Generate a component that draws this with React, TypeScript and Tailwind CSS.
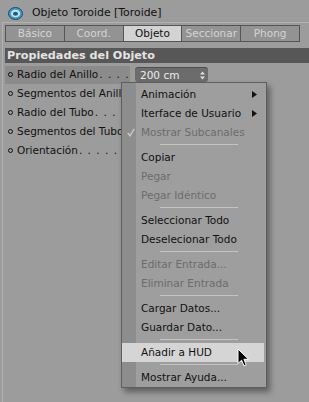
import React from "react";

const TABS = ["Básico", "Coord.", "Objeto", "Seccionar", "Phong"];

const ROWS = [
  { label: "Radio del Anillo", active: true },
  { label: "Segmentos del Anillo" },
  { label: "Radio del Tubo" },
  { label: "Segmentos del Tubo" },
  { label: "Orientación" },
];

type Item =
  | { sep: true }
  | { sep?: false; label: string; disabled?: boolean; sub?: boolean; check?: boolean; hover?: boolean };

const MENU: Item[] = [
  { label: "Animación", sub: true },
  { label: "Iterface de Usuario", sub: true },
  { label: "Mostrar Subcanales", disabled: true, check: true },
  { sep: true },
  { label: "Copiar" },
  { label: "Pegar", disabled: true },
  { label: "Pegar Idéntico", disabled: true },
  { sep: true },
  { label: "Seleccionar Todo" },
  { label: "Deselecionar Todo" },
  { sep: true },
  { label: "Editar Entrada...", disabled: true },
  { label: "Eliminar Entrada", disabled: true },
  { sep: true },
  { label: "Cargar Datos..." },
  { label: "Guardar Dato..." },
  { sep: true },
  { label: "Añadir a HUD", hover: true },
  { sep: true },
  { label: "Mostrar Ayuda..." },
];

function TorusIcon() {
  return (
    <svg width="15" height="13" viewBox="0 0 15 13">
      <ellipse cx="7.5" cy="6.5" rx="7" ry="6" fill="#3d9cc8" stroke="#1d4a66" strokeWidth="1" />
      <ellipse cx="7.5" cy="6.5" rx="4.6" ry="3.8" fill="#bfe6f5" />
      <ellipse cx="7.5" cy="6.8" rx="2.6" ry="2" fill="#2a5a78" />
    </svg>
  );
}

function ContextMenu() {
  return (
    <div className="absolute left-[121px] top-[82px] w-[146px] border border-[#5e5e5e] bg-[#9e9e9e] pt-[1.5px] pb-[0.5px] shadow-[3px_4px_6px_rgba(0,0,0,0.4)]">
      <div className="absolute inset-y-0 left-0 w-[14px] bg-[#8d8d8d]" />
      {MENU.map((item, i) =>
        item.sep ? (
          <div key={i} className="relative flex h-[6px] items-center pl-[38px]">
            <div className="h-px w-[78px] bg-[#c4c4c4]" />
          </div>
        ) : (
          <div
            key={i}
            className={
              "relative flex h-[19px] items-center pl-[19px] " +
              (item.hover ? "mr-[2px] bg-[#d5d5d5] " : "") +
              (item.disabled ? "text-[#6c6c6c]" : "text-[#111]")
            }
          >
            {item.check && (
              <svg className="absolute left-[5px] top-[5px]" width="8" height="9" viewBox="0 0 8 9">
                <path d="M0.8 5 L3 7.8 L7.2 0.8" fill="none" stroke="#c9c9c9" strokeWidth="1.4" />
              </svg>
            )}
            <span>{item.label}</span>
            {item.sub && (
              <svg className="absolute right-[9px] top-[6px]" width="5" height="7" viewBox="0 0 5 7">
                <path d="M0 0 L5 3.5 L0 7 Z" fill="#111" />
              </svg>
            )}
          </div>
        )
      )}
    </div>
  );
}

function Cursor() {
  return (
    <svg className="absolute left-[237px] top-[348px]" width="13" height="20" viewBox="0 0 13 20">
      <path
        d="M1 1 L1 15.5 L4.6 12.2 L7 17.8 L9.2 16.8 L6.9 11.3 L11.5 11.3 Z"
        fill="#000"
        stroke="#fff"
        strokeWidth="1"
        strokeLinejoin="round"
      />
    </svg>
  );
}

export default function App() {
  return (
    <div className="relative h-[402px] w-[309px] overflow-hidden bg-[#9c9c9c] font-['DejaVu_Sans',sans-serif] text-[10.5px] leading-none text-[#111]">
      <div className="flex h-[22px] items-center gap-[9px] pl-[8px] pt-[4px]">
        <TorusIcon />
        <span className="text-[10.9px]">Objeto Toroide [Toroide]</span>
      </div>

      <div className="ml-[2px] h-[380px] border-l border-t border-[#b2b2b2] pl-[2px] pt-[2px]">
        <div className="flex h-[17px] w-[295px] border border-[#555]">
          {TABS.map((t, i) => (
            <div
              key={t}
              className={
                "flex flex-1 items-center justify-center " +
                (i > 0 ? "border-l border-[#555] " : "") +
                (t === "Objeto" ? "bg-[#d3d3d3] text-[#111]" : "bg-[#939393] text-[#d4d4d4]")
              }
            >
              {t}
            </div>
          ))}
        </div>

        <div className="mt-[6px] flex h-[15px] items-center bg-[#575757] pl-[2px] text-[11.2px] font-bold text-[#e4e4e4]">
          Propiedades del Objeto
        </div>

        <div className="mt-[2px] flex flex-col">
          {ROWS.map((r) => (
            <div key={r.label} className="flex h-[19px] items-center">
              <div
                className={
                  "flex h-[18px] w-[125px] items-center overflow-hidden whitespace-nowrap pl-[3px] " +
                  (r.active ? "bg-[#8b8b8b]" : "")
                }
              >
                <span className="mr-[4px] inline-block h-[5px] w-[5px] shrink-0 rounded-full border border-[#111]" />
                <span className="shrink-0">{r.label}</span>
                <span className="ml-[1px] overflow-hidden tracking-[1px]">. . . . . . . . . . . . .</span>
              </div>
              {r.active && (
                <div className="ml-[5px] flex h-[15px] w-[73px] items-center justify-between rounded-[3px] border-t border-[#4e4e4e] bg-[#6c6c6c] pl-[5px] pr-[3px] text-[#ececec]">
                  <span>200 cm</span>
                  <svg width="5" height="9" viewBox="0 0 5 9">
                    <path d="M0 3.5 L2.5 0.5 L5 3.5 Z M0 5.5 L2.5 8.5 L5 5.5 Z" fill="#e0e0e0" />
                  </svg>
                </div>
              )}
            </div>
          ))}
        </div>
      </div>

      <ContextMenu />
      <Cursor />
    </div>
  );
}
